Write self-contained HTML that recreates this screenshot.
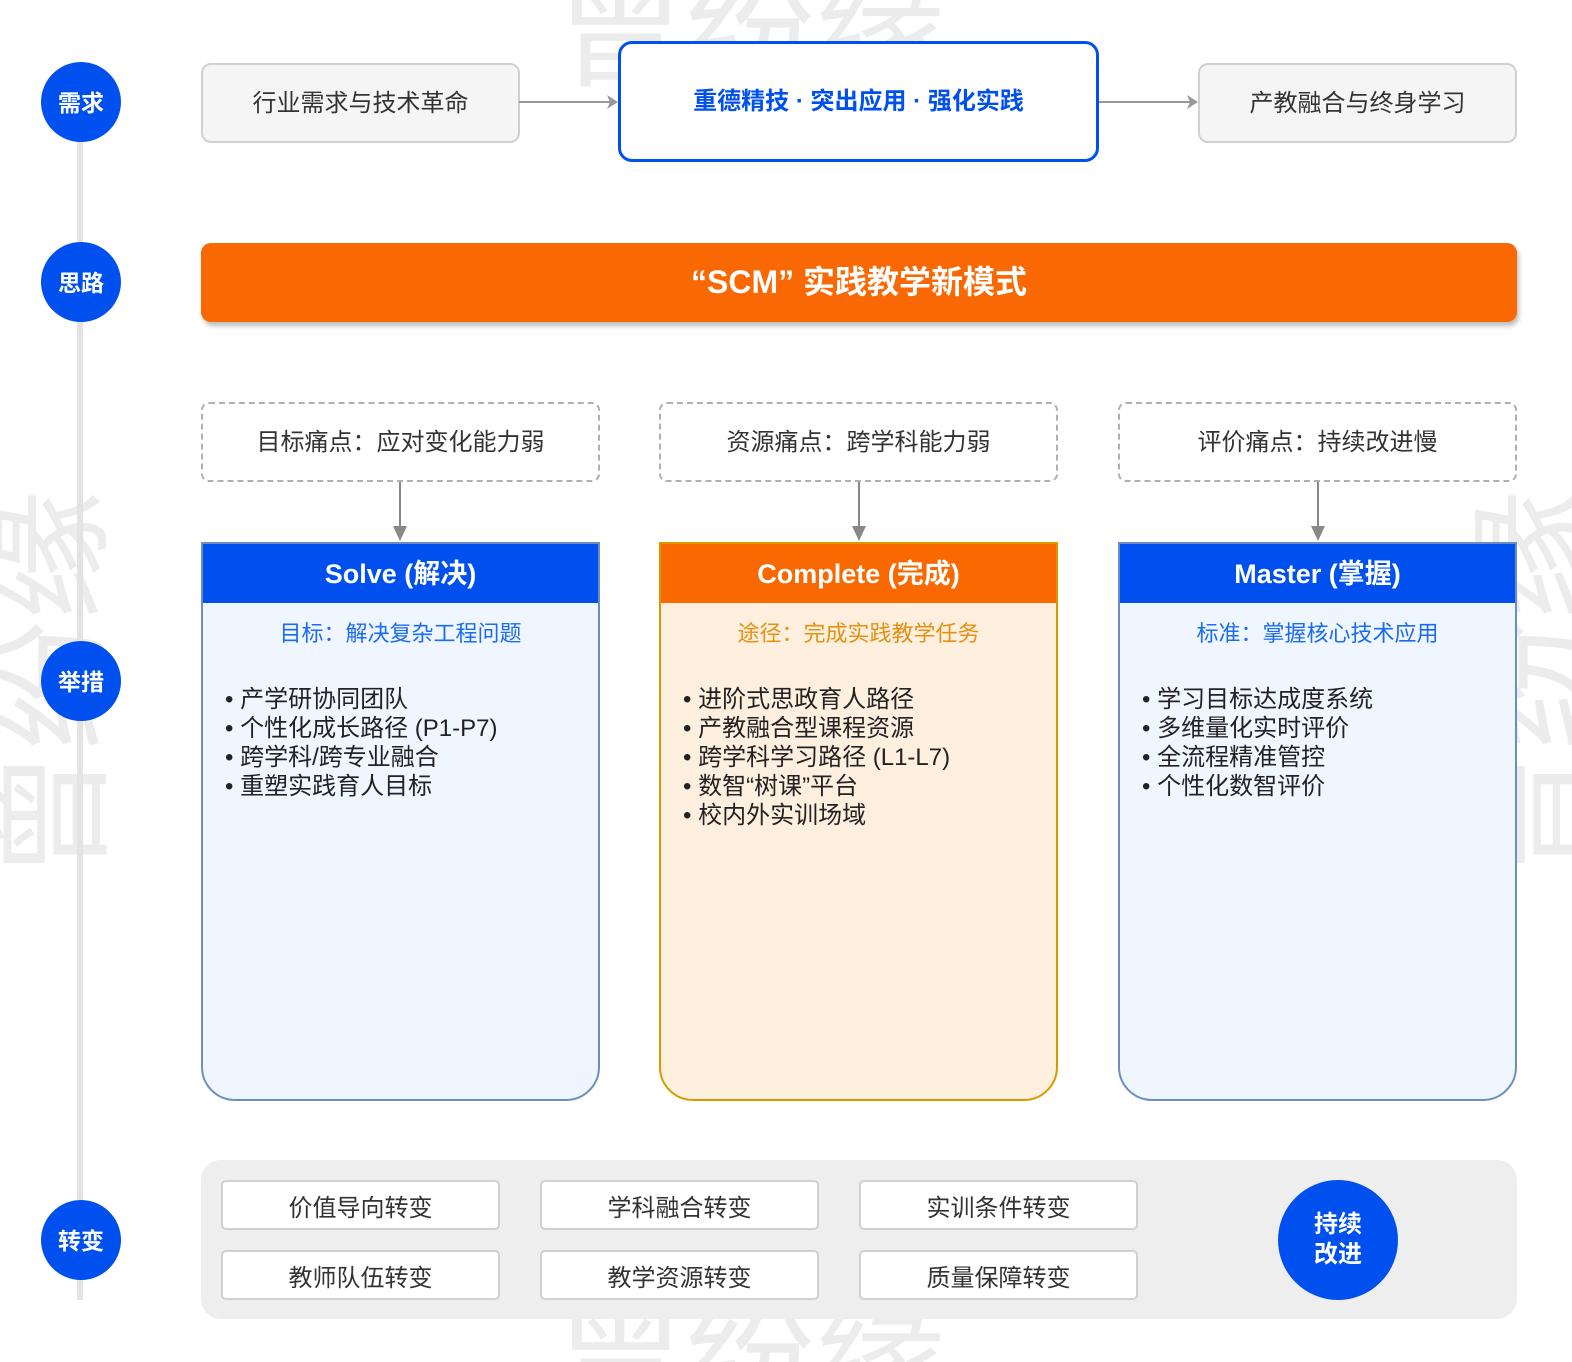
<!DOCTYPE html>
<html style="overflow:hidden;height:1362px"><head><meta charset="utf-8"><style>
*{margin:0;padding:0;box-sizing:border-box}
body{width:1572px;height:1362px;background:#fff;position:relative;overflow:hidden;font-family:"Liberation Sans","Noto Sans CJK SC",sans-serif;color:#333}
#w{position:absolute;left:0;top:0;width:1572px;height:1362px;overflow:hidden}
.a{position:absolute}
.wm{position:absolute;color:#ececec;font-size:130px;line-height:130px;font-family:"Noto Sans CJK SC",sans-serif;white-space:nowrap;z-index:0}
.circ{position:absolute;left:41px;width:80px;height:80px;border-radius:50%;background:#0050ef;color:#fff;font-weight:bold;font-size:23px;display:flex;align-items:center;justify-content:center;z-index:2;padding-bottom:3px}
.gbox{position:absolute;top:63px;height:80px;width:319px;background:#f5f5f5;border:2px solid #d0d0d0;border-radius:10px;display:flex;align-items:center;justify-content:center;font-size:24px;color:#333;padding-bottom:6px}
.dash{position:absolute;top:402px;height:80px;width:399px;border:2px dashed #b0b0b0;border-radius:8px;display:flex;align-items:center;justify-content:center;font-size:24px;color:#333;background:#fff;padding-bottom:6px}
.card{position:absolute;top:542px;width:399px;height:559px;border:2px solid #6c8ebf;background:#eff6ff;border-radius:0 0 34px 34px;overflow:hidden}
.card .h{height:59px;background:#0050ef;color:#fff;font-weight:bold;font-size:27px;display:flex;align-items:center;justify-content:center;padding-bottom:4px}
.card .s{text-align:center;font-size:22px;color:#1a6cf0;margin-top:13px}
.card ul{list-style:none;margin:37px 0 0 22px;font-size:24px;line-height:29px;color:#222}
.card li:before{content:"• ";}
.btn{position:absolute;width:279px;height:50px;background:#fff;border:2px solid #d0d0d0;border-radius:5px;display:flex;align-items:center;justify-content:center;font-size:24px;color:#333}
</style></head><body><div id="w">
<div class="wm" style="left:555px;top:-45px">曾纷缘</div>
<div class="wm" style="left:555px;top:1280px">曾纷缘</div>
<div class="wm" style="left:-155px;top:620px;transform:rotate(-90deg)">曾纷缘</div>
<div class="wm" style="left:1325px;top:620px;transform:rotate(-90deg)">曾纷缘</div>

<div class="a" style="left:77px;top:102px;width:6px;height:1198px;background:#e3e3e3;z-index:1"></div>
<div class="circ" style="top:62px">需求</div>
<div class="circ" style="top:242px">思路</div>
<div class="circ" style="top:641px">举措</div>
<div class="circ" style="top:1200px">转变</div>

<div class="gbox" style="left:201px">行业需求与技术革命</div>
<div class="gbox" style="left:1198px">产教融合与终身学习</div>
<div class="a" style="left:618px;top:41px;width:481px;height:121px;border:3px solid #0050ef;border-radius:14px;background:#fff;text-align:center;padding-top:44px;font-size:24px;line-height:28px;font-weight:bold;color:#0050ef">重德精技 · 突出应用 · 强化实践</div>
<svg class="a" style="left:519px;top:94px" width="100" height="16"><line x1="0" y1="8" x2="92" y2="8" stroke="#999" stroke-width="2"/><path d="M88 1 L99 8 L88 15 L91 8Z" fill="#999"/></svg>
<svg class="a" style="left:1099px;top:94px" width="100" height="16"><line x1="0" y1="8" x2="92" y2="8" stroke="#999" stroke-width="2"/><path d="M88 1 L99 8 L88 15 L91 8Z" fill="#999"/></svg>

<div class="a" style="left:201px;top:243px;width:1316px;height:79px;background:#f96802;border-radius:10px;box-shadow:2px 4px 5px rgba(0,0,0,.25);color:#fff;font-weight:bold;font-size:32px;display:flex;align-items:center;justify-content:center;padding-bottom:6px">“SCM” 实践教学新模式</div>

<div class="dash" style="left:201px">目标痛点：应对变化能力弱</div>
<div class="dash" style="left:659px">资源痛点：跨学科能力弱</div>
<div class="dash" style="left:1118px">评价痛点：持续改进慢</div>
<svg class="a" style="left:392px;top:482px" width="16" height="60"><line x1="8" y1="0" x2="8" y2="48" stroke="#888" stroke-width="2"/><path d="M1 44 L8 59 L15 44Z" fill="#888"/></svg>
<svg class="a" style="left:851px;top:482px" width="16" height="60"><line x1="8" y1="0" x2="8" y2="48" stroke="#888" stroke-width="2"/><path d="M1 44 L8 59 L15 44Z" fill="#888"/></svg>
<svg class="a" style="left:1310px;top:482px" width="16" height="60"><line x1="8" y1="0" x2="8" y2="48" stroke="#888" stroke-width="2"/><path d="M1 44 L8 59 L15 44Z" fill="#888"/></svg>

<div class="card" style="left:201px"><div class="h">Solve (解决)</div><div class="s">目标：解决复杂工程问题</div>
<ul><li>产学研协同团队</li><li>个性化成长路径 (P1-P7)</li><li>跨学科/跨专业融合</li><li>重塑实践育人目标</li></ul></div>
<div class="card" style="left:659px;border-color:#d79b00;background:#ffefdf"><div class="h" style="background:#fa6800">Complete (完成)</div><div class="s" style="color:#e69010">途径：完成实践教学任务</div>
<ul><li>进阶式思政育人路径</li><li>产教融合型课程资源</li><li>跨学科学习路径 (L1-L7)</li><li>数智“树课”平台</li><li>校内外实训场域</li></ul></div>
<div class="card" style="left:1118px"><div class="h">Master (掌握)</div><div class="s">标准：掌握核心技术应用</div>
<ul><li>学习目标达成度系统</li><li>多维量化实时评价</li><li>全流程精准管控</li><li>个性化数智评价</li></ul></div>

<div class="a" style="left:201px;top:1160px;width:1316px;height:159px;background:#eeeeee;border-radius:20px"></div>
<div class="btn" style="left:221px;top:1180px">价值导向转变</div>
<div class="btn" style="left:540px;top:1180px">学科融合转变</div>
<div class="btn" style="left:859px;top:1180px">实训条件转变</div>
<div class="btn" style="left:221px;top:1250px">教师队伍转变</div>
<div class="btn" style="left:540px;top:1250px">教学资源转变</div>
<div class="btn" style="left:859px;top:1250px">质量保障转变</div>
<div class="a" style="left:1278px;top:1180px;width:120px;height:120px;border-radius:50%;background:#0050ef;color:#fff;font-weight:bold;font-size:24px;line-height:30px;display:flex;align-items:center;justify-content:center;text-align:center">持续<br>改进</div>
</div></body></html>
